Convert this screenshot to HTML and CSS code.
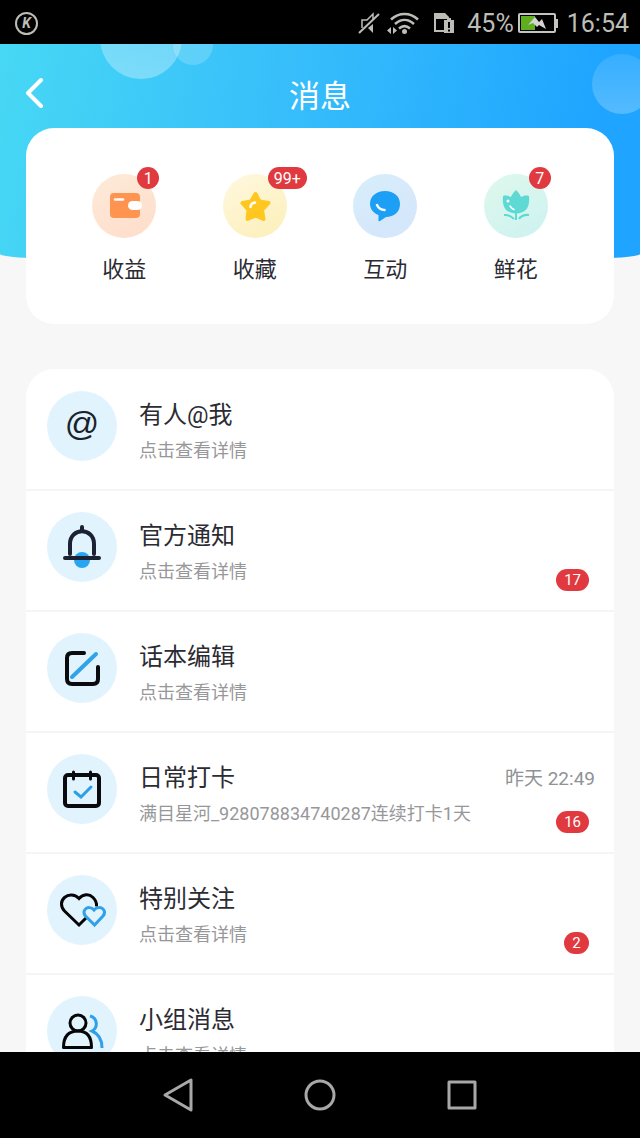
FILE: index.html
```html
<!DOCTYPE html>
<html lang="zh-CN">
<head>
    <meta charset="UTF-8">
    <meta name="viewport" content="width=device-width, initial-scale=1.0">
    <title>消息</title>
    <link rel="stylesheet" href="styles.css">
</head>
<body>

    <!-- Status bar -->
    <div class="status-bar">
        <span class="app-mark">K</span>
        <svg class="mute" width="24" height="24" viewBox="0 0 24 24" fill="none" stroke="#bdbdb8" stroke-width="2">
            <path d="M2 22 22 3"/>
            <path d="M5 17V9h5l6-6v5" stroke-width="1.500"/>
            <path d="m11 17 5 5v-9z" fill="#bdbdb8" stroke="none"/>
        </svg>
        <svg class="wifi" width="34" height="24" viewBox="0 0 34 24" fill="none" stroke="#bdbdb8" stroke-width="2.500">
            <path d="M5 8.500c8-7.500 19-7.500 27 0M9 13c6-5.500 13-5.500 19 0M13 17.500c3.500-3 7.500-3 11 0"/>
            <circle cx="18.500" cy="20.500" r="2.500" fill="#bdbdb8" stroke="none"/>
            <path d="M1 19.500 5 16v7zM11 19.500 7 16v7z" fill="#bdbdb8" stroke="none"/>
        </svg>
        <svg class="sim" width="22" height="24" viewBox="0 0 22 24">
            <path d="M1 21V2h11l4 4v3h-2V8H3v11h8v2z" fill="#bdbdb8"/>
            <path d="M11 9h3V7h4v2h3v13H11z" fill="#bdbdb8"/>
            <path d="M16 11v6M16 18.500v2" stroke="#000" stroke-width="2"/>
        </svg>
        <span class="percent">45%</span>
        <svg class="battery" width="40" height="24" viewBox="0 0 40 24">
            <rect x="1" y="3" width="36" height="18" rx="1" fill="none" stroke="#c4c4c0" stroke-width="2"/>
            <path d="M37 8h3v9h-3z" fill="#c4c4c0"/>
            <path d="M3 5h14v14H3z" fill="#5fae20"/>
            <path d="m10 14 7-8 4 5 3-3 4 10-7-4-2 2-4-4z" fill="#d4d4d0"/>
        </svg>
        <span class="clock">16:54</span>
    </div>

    <main class="page">
        <header class="top">
            <div class="top-bg">
                <span class="bubble bubble-big"></span>
                <span class="bubble bubble-small"></span>
                <span class="bubble bubble-right"></span>
            </div>
            <div class="title-bar">
                <button class="back" type="button" aria-label="返回">
                    <svg width="18" height="32" viewBox="0 0 18 32" fill="none" stroke="#fff" stroke-width="4" stroke-linecap="round" stroke-linejoin="round"><path d="M15 3 2 16l13 13"/></svg>
                </button>
                <h1>消息</h1>
            </div>

            <nav class="shortcuts">
                <a href="#income">
                    <span class="round orange">
                        <svg width="64" height="64" viewBox="0 0 64 64">
                            <rect x="18" y="19" width="30" height="25" rx="4" fill="#ff9350"/>
                            <path d="M23 25.500h8" stroke="#fff" stroke-width="2.500" stroke-linecap="round"/>
                            <rect x="36" y="27" width="14" height="9" rx="4.500" fill="#fff"/>
                        </svg>
                        <span class="badge">1</span>
                    </span>
                    收益
                </a>
                <a href="#favorites">
                    <span class="round yellow">
                        <svg width="64" height="64" viewBox="0 0 64 64">
                            <path d="m32.500 20 4 7.500 9 1.500-6.500 7 1.500 9-8-3.500-8 3.500 1-9-6-7 8.500-1.500z" fill="#ffc71f" stroke="#ffc71f" stroke-width="4" stroke-linejoin="round"/>
                            <path d="M27.500 33c0-2.500 2-4 4.500-4.500" fill="none" stroke="#fff" stroke-width="2.500" stroke-linecap="round"/>
                        </svg>
                        <span class="badge">99+</span>
                    </span>
                    收藏
                </a>
                <a href="#interact">
                    <span class="round blue">
                        <svg width="64" height="64" viewBox="0 0 64 64">
                            <path d="M32 17c9 0 15 5.500 15 13 0 8-6 13-14 13l-6 4c-1 .5-2 0-1.500-1V41c-5-2-8.500-6-8.500-11 0-7.500 6-13 15-13z" fill="#1d9ff5"/>
                            <path d="M24 31c1.500 3 4.500 5 7.500 5" fill="none" stroke="#fff" stroke-width="2.500" stroke-linecap="round"/>
                        </svg>
                    </span>
                    互动
                </a>
                <a href="#flowers">
                    <span class="round green">
                        <svg width="64" height="64" viewBox="0 0 64 64">
                            <path d="M19 22c3-1 6 0 8 1 1-3 3-5 5-7 2 2 4 4 5 7 2-1 5-2 8-1 1 10-2 17-13 17.500C21 39 18 32 19 22z" fill="#5fd9d4"/>
                            <path d="M32 38v8M20 41c4-.5 7 1 10 4M45 41c-4-.5-8 1-10 4" fill="none" stroke="#5fd9d4" stroke-width="2"/>
                            <circle cx="24" cy="27" r="1.500" fill="#fff"/>
                            <path d="M26 32c1 1.500 2.500 3 4 3.500" fill="none" stroke="#fff" stroke-width="1.500" stroke-linecap="round"/>
                        </svg>
                        <span class="badge">7</span>
                    </span>
                    鲜花
                </a>
            </nav>
        </header>

        <!-- Message list -->
        <ul class="messages">
            <li>
                <a href="#mentions">
                    <span class="icon at">@</span>
                    <span class="text">
                        <strong>有人@我</strong>
                        <small>点击查看详情</small>
                    </span>
                </a>
            </li>
            <li>
                <a href="#notice">
                    <span class="icon">
                        <svg width="70" height="70" viewBox="0 0 70 70" fill="none" stroke="#1c2233" stroke-width="4" stroke-linecap="round">
                            <circle cx="35" cy="48" r="8" fill="#27a4f2" stroke="none"/>
                            <path d="M35 15v4M23 42V32c0-17 24-17 24 0v10M18 46h34"/>
                        </svg>
                    </span>
                    <span class="text">
                        <strong>官方通知</strong>
                        <small>点击查看详情</small>
                    </span>
                    <span class="side"><span class="count">17</span></span>
                </a>
            </li>
            <li>
                <a href="#edit">
                    <span class="icon">
                        <svg width="70" height="70" viewBox="0 0 70 70" fill="none" stroke="#0b0b0d" stroke-width="4" stroke-linecap="round">
                            <path d="M37 20H25q-5 0-5 5v21q0 5 5 5h21q5 0 5-5V34"/>
                            <path d="M25 44 49 21" stroke="#2fa4e9"/>
                        </svg>
                    </span>
                    <span class="text">
                        <strong>话本编辑</strong>
                        <small>点击查看详情</small>
                    </span>
                </a>
            </li>
            <li>
                <a href="#checkin">
                    <span class="icon">
                        <svg width="70" height="70" viewBox="0 0 70 70" fill="none" stroke="#0b0b0d" stroke-width="4" stroke-linecap="round">
                            <rect x="18" y="21" width="34" height="31" rx="3"/>
                            <path d="M26.500 18v7M43.500 18v7" stroke-width="3"/>
                            <path d="m28 38 6 5 10-10" stroke="#2f9fe4" stroke-width="3"/>
                        </svg>
                    </span>
                    <span class="text">
                        <strong>日常打卡</strong>
                        <small>满目星河_928078834740287连续打卡1天</small>
                    </span>
                    <span class="side">
                        <time>昨天 22:49</time>
                        <span class="count">16</span>
                    </span>
                </a>
            </li>
            <li>
                <a href="#following">
                    <span class="icon">
                        <svg width="70" height="70" viewBox="0 0 70 70" fill="none" stroke="#050507" stroke-width="3">
                            <path d="M39 43 32 50 17.500 36c-4-4-4-10 0-13.500s10-3.500 14.500 1c4-4.500 10-5 14-1 3 3 4 5 3.500 9"/>
                            <path d="M47.500 50 38.500 41c-2-2.500-2-5 0-7s6-2 8.500 1c2.500-3 7-3 9-1s2 4.500 0 7z" stroke="#2fa0ea"/>
                        </svg>
                    </span>
                    <span class="text">
                        <strong>特别关注</strong>
                        <small>点击查看详情</small>
                    </span>
                    <span class="side"><span class="count">2</span></span>
                </a>
            </li>
            <li>
                <a href="#groups">
                    <span class="icon">
                        <svg width="70" height="70" viewBox="0 0 70 70" fill="none" stroke="#050507" stroke-width="3">
                            <circle cx="31" cy="27" r="8"/>
                            <path d="M16.500 51.500c0-11 5-16.500 14.500-16.500s13.500 5.500 13.500 16.500z" stroke-linejoin="round"/>
                            <path d="M43 20c8 2 8 12 2 15 7 3 10 9 10 17" stroke="#2fa0ea"/>
                        </svg>
                    </span>
                    <span class="text">
                        <strong>小组消息</strong>
                        <small>点击查看详情</small>
                    </span>
                </a>
            </li>
        </ul>
    </main>

    <!-- System navigation -->
    <div class="system-nav">
        <button type="button" aria-label="Back">
            <svg width="36" height="36" viewBox="0 0 36 36" fill="none" stroke="#a8a8a8" stroke-width="3" stroke-linejoin="round"><path d="M31 3v30L5 18z"/></svg>
        </button>
        <button type="button" aria-label="Home">
            <svg width="36" height="36" viewBox="0 0 36 36" fill="none" stroke="#a8a8a8" stroke-width="3"><circle cx="18" cy="18" r="14"/></svg>
        </button>
        <button type="button" aria-label="Recent apps">
            <svg width="36" height="36" viewBox="0 0 36 36" fill="none" stroke="#a8a8a8" stroke-width="3" stroke-linejoin="round"><path d="M5 5h26v26H5z"/></svg>
        </button>
    </div>

</body>
</html>
```
FILE: styles.css
```css
/* General Styling */
* {
    box-sizing: border-box;
}

body {
    display: flex;
    flex-direction: column;
    height: 100vh;
    margin: 0;
    background: #f7f7f7;
    color: #2b2b33;
    font-family: Roboto, "Noto Sans CJK SC", sans-serif;
}

a {
    color: inherit;
    text-decoration: none;
}

button {
    display: flex;
    padding: 0;
    border: none;
    background: none;
    cursor: pointer;
}

svg {
    display: block;
}

/* Status Bar */
.status-bar {
    display: flex;
    flex: none;
    align-items: center;
    height: 44px;
    padding: 2px 11px 0 15px;
    background: #000;
    color: #bdbdb8;
    font-size: 25px;
}

.app-mark {
    width: 23px;
    height: 23px;
    margin-right: auto;
    border: 2px solid #bdbdb8;
    border-radius: 50%;
    font-size: 14px;
    font-style: italic;
    font-weight: bold;
    line-height: 19px;
    text-align: center;
}

.wifi {
    margin: 0 13px 0 5px;
}

.sim {
    margin-right: 12px;
}

.battery {
    margin: 0 9px 0 4px;
}

/* Page */
.page {
    flex: 1;
    min-height: 0;
    overflow-y: auto;
    scrollbar-width: none;
}

.top {
    position: relative;
    padding: 0 26px;
}

.top-bg {
    position: absolute;
    inset: 0 0 auto;
    height: 220px;
    overflow: hidden;
    border-radius: 0 0 50% 50% / 0 0 10px 10px;
    background: linear-gradient(100deg, #47d8f4, #36bdfb 45%, #1fa5ff 90%);
}

.bubble {
    position: absolute;
    border-radius: 50%;
}

.bubble-big {
    top: -47px;
    left: 100px;
    width: 82px;
    height: 82px;
    background: linear-gradient(rgba(255, 255, 255, 0.2), rgba(255, 255, 255, 0.32));
}

.bubble-small {
    top: -19px;
    left: 173px;
    width: 40px;
    height: 40px;
    background: rgba(255, 255, 255, 0.18);
}

.bubble-right {
    top: 10px;
    right: -12px;
    width: 60px;
    height: 60px;
    background: linear-gradient(rgba(255, 255, 255, 0.1), rgba(255, 255, 255, 0.24));
}

.title-bar {
    position: relative;
    display: grid;
    grid-template-columns: 18px 1fr 18px;
    align-items: center;
    height: 84px;
    padding-top: 14px;
    color: #fff;
}

h1 {
    margin: 0;
    font-size: 31px;
    font-weight: normal;
    text-align: center;
}

/* Shortcuts */
.shortcuts {
    position: relative;
    display: grid;
    grid-template-columns: repeat(4, 1fr);
    height: 196px;
    padding: 46px 33px 0;
    border-radius: 28px;
    background: #fff;
}

.shortcuts a {
    display: flex;
    flex-direction: column;
    align-items: center;
    gap: 16px;
    font-size: 22px;
    line-height: 32px;
}

.round {
    position: relative;
    width: 64px;
    height: 64px;
    border-radius: 50%;
}

.orange {
    background: linear-gradient(150deg, #fdebd8, #ffdccb);
}

.yellow {
    background: linear-gradient(150deg, #fff8e0, #fcefb8);
}

.blue {
    background: linear-gradient(150deg, #d8eefb, #d3e5fb);
}

.green {
    background: linear-gradient(150deg, #dff8ec, #cdf2f1);
}

.badge,
.count {
    min-width: 22px;
    height: 22px;
    border-radius: 11px;
    background: #e03a40;
    color: #fff;
    line-height: 22px;
    text-align: center;
}

.badge {
    position: absolute;
    top: -7px;
    left: 45px;
    padding: 1px 6px 0;
    font-size: 16px;
}

/* Message List */
.messages {
    margin: 45px 26px 0;
    padding: 1px 0 0;
    overflow: hidden;
    border-radius: 28px 28px 0 0;
    background: #fff;
    list-style: none;
}

.messages li {
    border-bottom: 2px solid #f5f5f5;
}

.messages a {
    display: flex;
    height: 119px;
    padding: 0 19px 0 21px;
}

.icon {
    flex: none;
    width: 70px;
    height: 70px;
    margin: 21px 22px 0 0;
    border-radius: 50%;
    background: #e1f3fd;
}

.at {
    color: #1a232b;
    font-family: "Liberation Sans", sans-serif;
    font-size: 34px;
    line-height: 64px;
    text-align: center;
}

.text {
    display: flex;
    flex: 1;
    flex-direction: column;
    padding-top: 27px;
    line-height: 36px;
    white-space: nowrap;
}

.text strong {
    font-size: 24px;
    font-weight: normal;
}

.text small {
    color: #97979a;
    font-size: 18px;
}

.side {
    display: flex;
    flex-direction: column;
    align-items: flex-end;
    justify-content: flex-end;
    padding-bottom: 19px;
}

time {
    margin-bottom: 14px;
    color: #8f9296;
    font-size: 19px;
    line-height: 36px;
}

.count {
    min-width: 25px;
    margin-right: 6px;
    padding: 0 8px;
    font-size: 15px;
}

/* System Navigation */
.system-nav {
    display: flex;
    flex: none;
    align-items: center;
    justify-content: center;
    gap: 106px;
    height: 86px;
    background: #000;
}
```
